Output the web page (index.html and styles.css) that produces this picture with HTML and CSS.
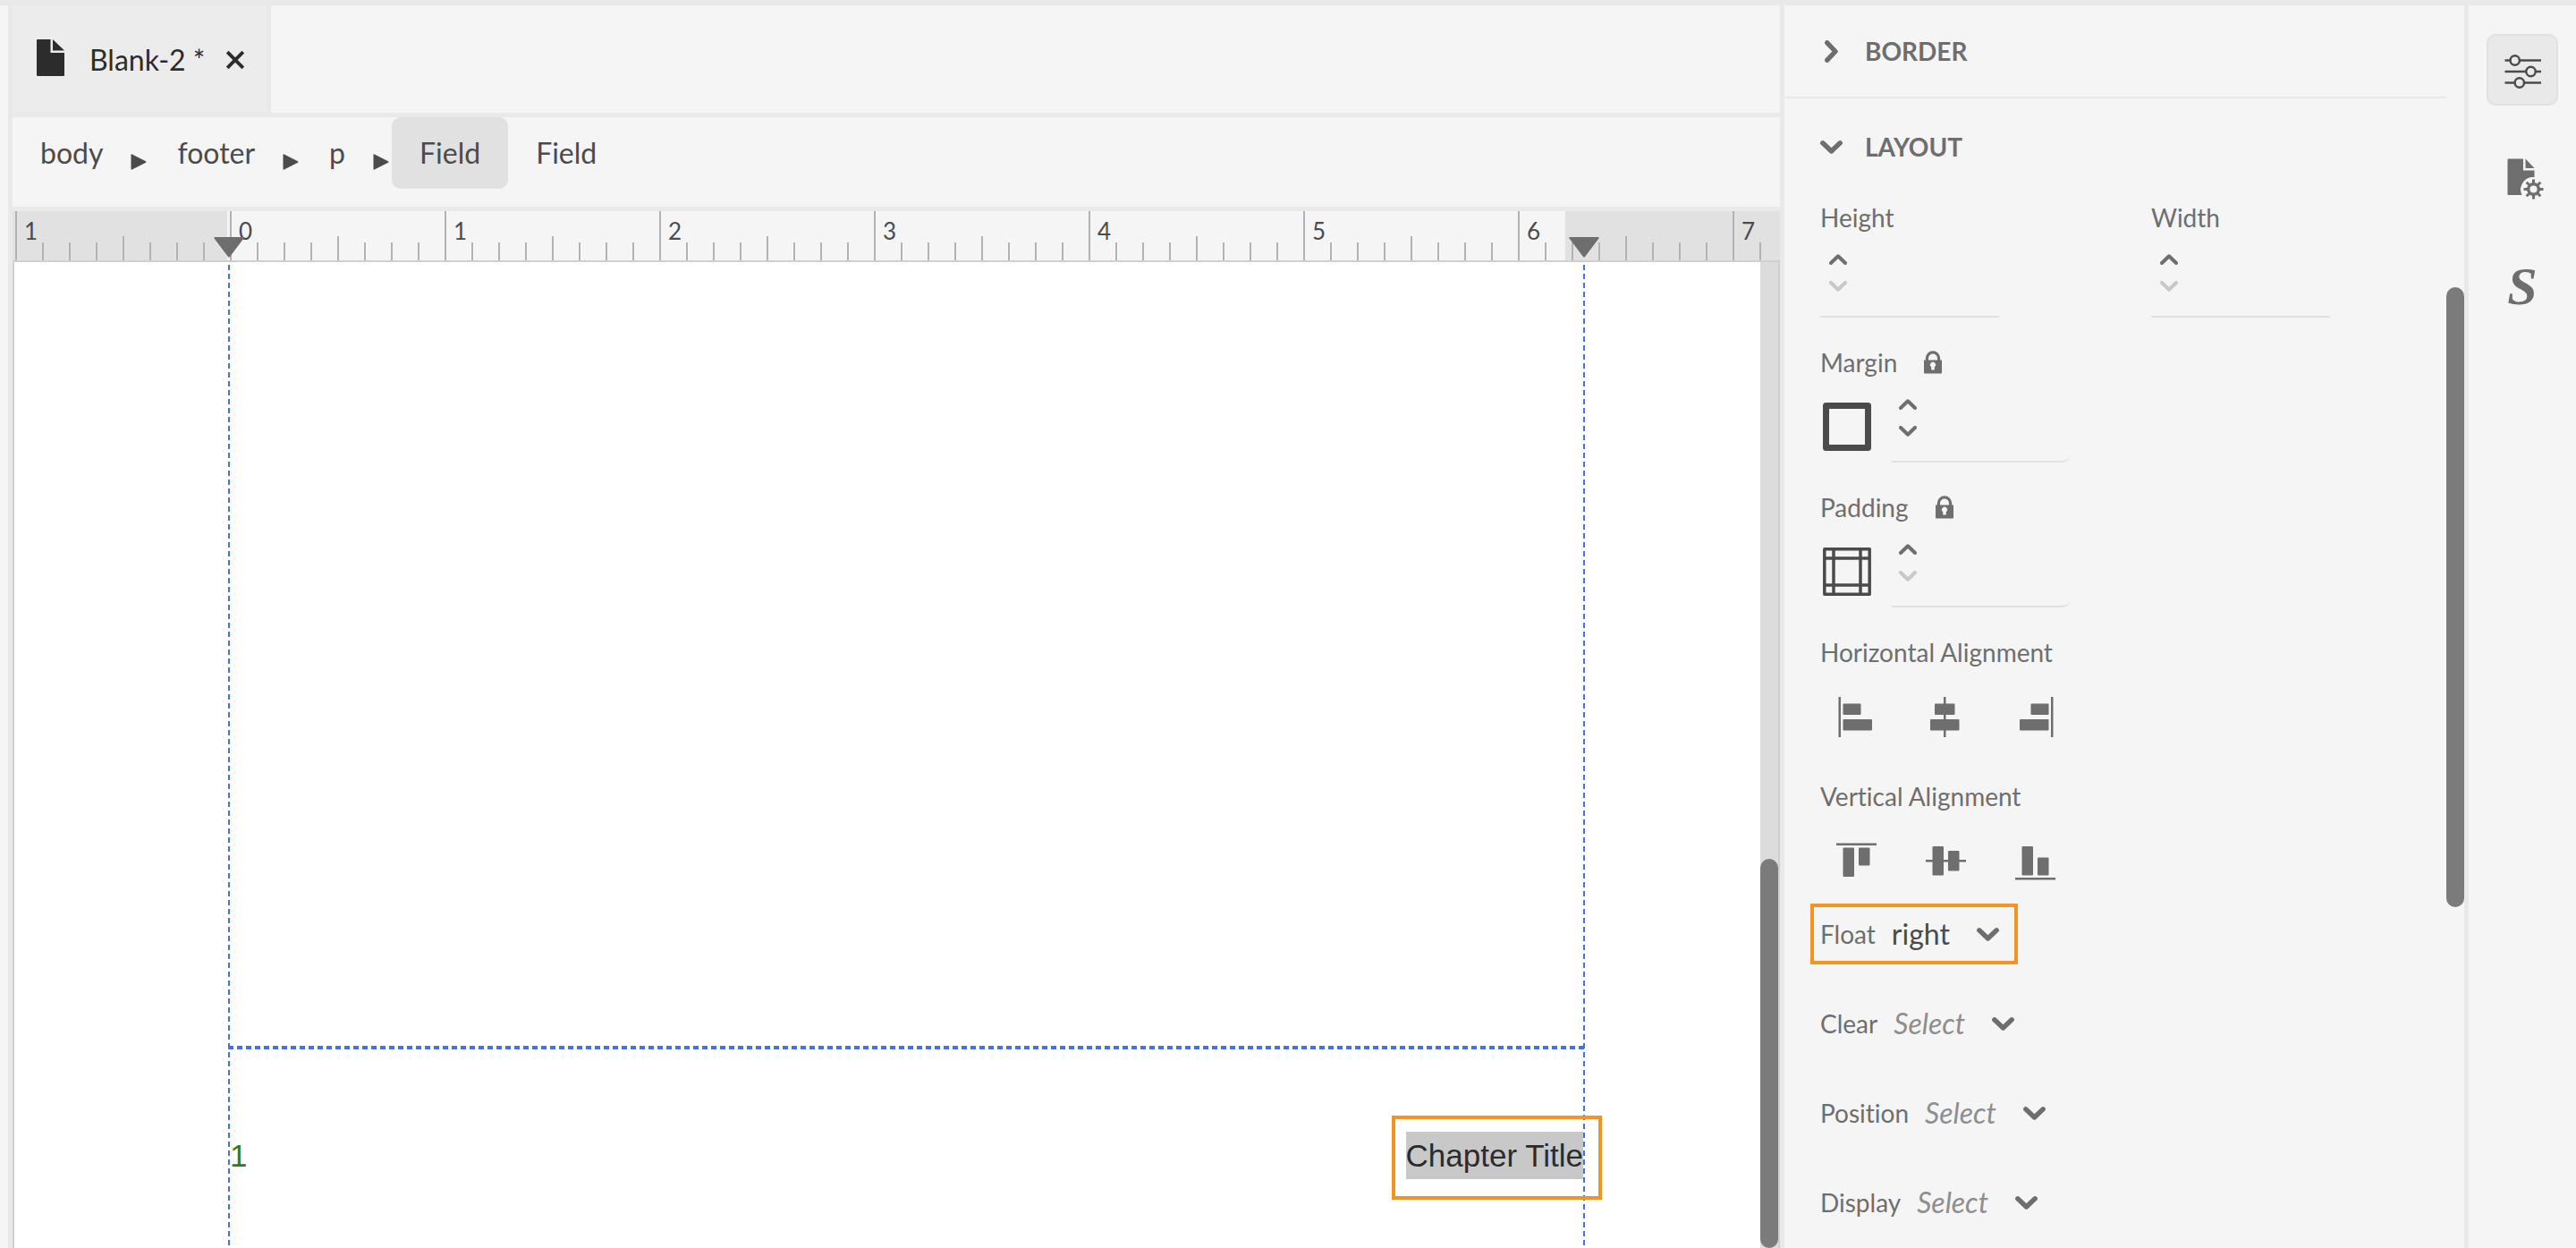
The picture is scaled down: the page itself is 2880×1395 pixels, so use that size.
FILE: index.html
```html
<!DOCTYPE html>
<html lang="en">
<head>
<meta charset="utf-8">
<title>Blank-2</title>
<link rel="stylesheet" href="styles.css">
</head>
<body>
<svg class="sprite" aria-hidden="true">
  <symbol id="i-up" viewBox="0 0 20 12"><path d="M2 10 10 2.300 18 10" fill="none" stroke="currentColor" stroke-width="4" stroke-linecap="round" stroke-linejoin="round"/></symbol>
  <symbol id="i-down" viewBox="0 0 20 12"><path d="M2 2 10 9.700 18 2" fill="none" stroke="currentColor" stroke-width="4" stroke-linecap="round" stroke-linejoin="round"/></symbol>
  <symbol id="i-chevron" viewBox="0 0 25 25"><path d="M2.800 7.800 12.500 17 22.200 7.800" fill="none" stroke="currentColor" stroke-width="5.400" stroke-linecap="round" stroke-linejoin="round"/></symbol>
  <symbol id="i-lock" viewBox="0 0 20 26"><path fill="currentColor" fill-rule="evenodd" d="M0 10.500h1.800V8.500a8.200 8.200 0 0 1 16.400 0v2H20V24.500a1 1 0 0 1-1 1H1a1 1 0 0 1-1-1ZM5 10.500h10V8.500a5 5 0 0 0-10 0ZM8.200 21.500h3.600v-3.400a3 3 0 1 0-3.600 0Z"/></symbol>
  <symbol id="i-arrow" viewBox="0 0 18 18"><path fill="currentColor" d="M.5 1.200Q.5 0 1.700.5L17 8.200q1 .8 0 1.600L1.700 17.500q-1.200.5-1.200-.7Z"/></symbol>
</svg>
<div class="app">
  <main class="editor">
    <div class="tabs">
      <div class="tab">
        <svg class="tab-file" viewBox="0 0 31 41"><path fill="currentColor" d="M1 0H15.500V15H31V40a1 1 0 0 1-1 1H1a1 1 0 0 1-1-1V1a1 1 0 0 1 1-1ZM18 0 31 12.500H18Z"/></svg>
        <span class="tab-name">Blank-2 *</span>
        <button class="icon-button tab-close" type="button" aria-label="Close"><svg viewBox="0 0 20 20"><path d="M1.200 1.200 18.800 18.800M18.800 1.200 1.200 18.800" stroke="currentColor" stroke-width="3.800"/></svg></button>
      </div>
    </div>
    <nav class="crumbs" aria-label="Element path">
      <button class="crumb" type="button">body</button>
      <svg class="crumb-arrow"><use href="#i-arrow"/></svg>
      <button class="crumb" type="button">footer</button>
      <svg class="crumb-arrow"><use href="#i-arrow"/></svg>
      <button class="crumb" type="button">p</button>
      <svg class="crumb-arrow"><use href="#i-arrow"/></svg>
      <button class="crumb crumb-active" type="button">Field</button>
      <button class="crumb" type="button">Field</button>
    </nav>
    <div class="ruler">
      <span class="inch">1</span><span class="inch">0</span><span class="inch">1</span><span class="inch">2</span><span class="inch">3</span><span class="inch">4</span><span class="inch">5</span><span class="inch">6</span><span class="inch">7</span>
      <svg class="marker marker-left" viewBox="0 0 34 23"><path fill="#6e6e6e" d="M1 0H33q1 .5.500 1.500L18 22q-1 1.400-2 0L.5 1.500Q0 .5 1 0Z"/></svg>
      <svg class="marker marker-right" viewBox="0 0 34 23"><path fill="#6e6e6e" d="M1 0H33q1 .5.500 1.500L18 22q-1 1.400-2 0L.5 1.500Q0 .5 1 0Z"/></svg>
    </div>
    <div class="canvas">
      <div class="page">
        <div class="page-body"></div>
        <div class="page-footer">
          <span class="page-number">1</span>
          <span class="field">Chapter Title<span class="field-callout"></span></span>
        </div>
      </div>
      <div class="track"><div class="thumb"></div></div>
    </div>
  </main>

  <aside class="panel">
    <div class="panel-content">
      <button class="section-head section-closed" type="button"><svg class="chevron chevron-closed"><use href="#i-chevron"/></svg>BORDER</button>
      <button class="section-head section-open" type="button"><svg class="chevron"><use href="#i-chevron"/></svg>LAYOUT</button>
      <div class="section-body">
        <div class="pair">
          <div class="group">
            <label class="label" for="height">Height</label>
            <div class="number">
              <div class="stepper"><button type="button" aria-label="Increase height"><svg><use href="#i-up"/></svg></button><button type="button" disabled aria-label="Decrease height"><svg><use href="#i-down"/></svg></button></div>
              <input id="height" type="text">
            </div>
          </div>
          <div class="group">
            <label class="label" for="width">Width</label>
            <div class="number">
              <div class="stepper"><button type="button" aria-label="Increase width"><svg><use href="#i-up"/></svg></button><button type="button" disabled aria-label="Decrease width"><svg><use href="#i-down"/></svg></button></div>
              <input id="width" type="text">
            </div>
          </div>
        </div>
        <div class="group">
          <div class="label-row"><label class="label" for="margin">Margin</label><button class="icon-button lock" type="button" aria-label="Lock margin"><svg><use href="#i-lock"/></svg></button></div>
          <div class="sides">
            <svg class="side-icon" viewBox="0 0 54 54"><rect x="3.500" y="3.500" width="47" height="47" fill="none" stroke="#4b4b4b" stroke-width="7" stroke-linejoin="round"/></svg>
            <div class="number number-round">
              <div class="stepper"><button type="button" aria-label="Increase margin"><svg><use href="#i-up"/></svg></button><button type="button" aria-label="Decrease margin"><svg><use href="#i-down"/></svg></button></div>
              <input id="margin" type="text">
            </div>
          </div>
        </div>
        <div class="group">
          <div class="label-row"><label class="label" for="padding">Padding</label><button class="icon-button lock" type="button" aria-label="Lock padding"><svg><use href="#i-lock"/></svg></button></div>
          <div class="sides">
            <svg class="side-icon" viewBox="0 0 54 54"><path d="M1.800 1.800H52.200V52.200H1.800ZM12 2V52M42 2V52M2 12H52M2 42H52" fill="none" stroke="#4b4b4b" stroke-width="3.500" stroke-linejoin="round"/></svg>
            <div class="number number-round">
              <div class="stepper"><button type="button" aria-label="Increase padding"><svg><use href="#i-up"/></svg></button><button type="button" disabled aria-label="Decrease padding"><svg><use href="#i-down"/></svg></button></div>
              <input id="padding" type="text">
            </div>
          </div>
        </div>
        <div class="align-group">
          <span class="label">Horizontal Alignment</span>
          <div class="aligns">
            <button class="icon-button align" type="button" aria-label="Align left"><svg viewBox="0 0 45 45" fill="currentColor"><path d="M2.500 0H5V45H2.500Z"/><rect x="7.500" y="7.500" width="20" height="12.500" rx="1"/><rect x="7.500" y="25" width="32.500" height="12.500" rx="1"/></svg></button>
            <button class="icon-button align" type="button" aria-label="Align center"><svg viewBox="0 0 45 45" fill="currentColor"><path d="M20 0H22.500V45H20Z"/><rect x="10" y="7.500" width="22.500" height="12.500" rx="1"/><rect x="5" y="25" width="32.500" height="12.500" rx="1"/></svg></button>
            <button class="icon-button align" type="button" aria-label="Align right"><svg viewBox="0 0 45 45" fill="currentColor"><path d="M40 0H42.500V45H40Z"/><rect x="17.500" y="7.500" width="20" height="12.500" rx="1"/><rect x="5" y="25" width="32.500" height="12.500" rx="1"/></svg></button>
          </div>
        </div>
        <div class="align-group">
          <span class="label">Vertical Alignment</span>
          <div class="aligns">
            <button class="icon-button align" type="button" aria-label="Align top"><svg viewBox="0 0 45 45" fill="currentColor"><path d="M0 2.500H45V5H0Z"/><rect x="7.500" y="7.500" width="12.500" height="32.500" rx="1"/><rect x="25" y="7.500" width="12.500" height="20" rx="1"/></svg></button>
            <button class="icon-button align" type="button" aria-label="Align middle"><svg viewBox="0 0 45 45" fill="currentColor"><path d="M0 21H45V23.500H0Z"/><rect x="7.500" y="6" width="12.500" height="32.500" rx="1"/><rect x="25" y="11" width="12.500" height="22.500" rx="1"/></svg></button>
            <button class="icon-button align" type="button" aria-label="Align bottom"><svg viewBox="0 0 45 45" fill="currentColor"><path d="M0 41H45V43.500H0Z"/><rect x="7.500" y="6" width="12.500" height="32.500" rx="1"/><rect x="25" y="18.500" width="12.500" height="20" rx="1"/></svg></button>
          </div>
        </div>
        <div class="choices">
          <div class="choice choice-marked"><label class="label" for="float">Float</label><span class="select"><select id="float"><option>right</option></select><svg class="chevron"><use href="#i-chevron"/></svg></span></div>
          <div class="choice"><label class="label" for="clear">Clear</label><span class="select select-empty"><select id="clear"><option>Select</option></select><svg class="chevron"><use href="#i-chevron"/></svg></span></div>
          <div class="choice"><label class="label" for="position">Position</label><span class="select select-empty"><select id="position"><option>Select</option></select><svg class="chevron"><use href="#i-chevron"/></svg></span></div>
          <div class="choice"><label class="label" for="display">Display</label><span class="select select-empty"><select id="display"><option>Select</option></select><svg class="chevron"><use href="#i-chevron"/></svg></span></div>
        </div>
      </div>
    </div>
    <div class="panel-track"><div class="panel-thumb"></div></div>
  </aside>

  <nav class="rail" aria-label="Panels">
    <button class="rail-button rail-active" type="button" aria-label="Content properties"><svg viewBox="0 0 45 45" fill="none" stroke="currentColor" stroke-width="2.500"><path d="M2.500 11.500H8.500M19 11.500H43M2.500 24H26M37 24H43M2.500 36.500H13.500M24 36.500H43"/><circle cx="13.700" cy="11.500" r="5.200"/><circle cx="31.500" cy="24" r="5.200"/><circle cx="18.800" cy="36.500" r="5.200"/></svg></button>
    <button class="rail-button" type="button" aria-label="File properties"><svg viewBox="0 0 45 45"><path fill="currentColor" d="M6.500 .5H23V13.500H35.500V21A14 14 0 0 0 21.500 41H6.500a1 1 0 0 1-1-1V1.500a1 1 0 0 1 1-1ZM25.500 .5 35.500 11H25.500Z"/><circle cx="34.500" cy="34.500" r="5.800" fill="none" stroke="currentColor" stroke-width="3.400"/><path stroke="currentColor" stroke-width="3" d="M34.500 23.500V28M34.500 41V45.500M23.500 34.500H28M41 34.500H45.500M26.700 26.700 30 30M39 39 42.300 42.300M26.700 42.300 30 39M39 30 42.300 26.700"/></svg></button>
    <button class="rail-button rail-letter" type="button" aria-label="Styles">S</button>
  </nav>
</div>
</body>
</html>
```

FILE: styles.css
```css
* { box-sizing: border-box; }

body {
  margin: 0;
  background: #f5f5f5;
  color: #4b4b4b;
  font: 32px/40px Lato, "Open Sans", sans-serif;
  font-variant-ligatures: none;
}

button, input, select {
  margin: 0;
  padding: 0;
  border: 0;
  background: none;
  color: inherit;
  font: inherit;
}

svg { display: block; flex: none; }
.sprite { position: absolute; width: 0; height: 0; }

.app {
  display: flex;
  height: 100vh;
  padding-left: 9px;
  border-top: 6px solid #e9e9e9;
  overflow: hidden;
}

.icon-button { display: flex; color: #6e6e6e; }

/* Editor column */
.editor {
  flex: 1;
  min-width: 0;
  display: flex;
  flex-direction: column;
  border-left: 5px solid #e9e9e9;
  border-right: 5px solid #e9e9e9;
}

.tabs {
  display: flex;
  height: 125px;
  border-bottom: 5px solid #e9e9e9;
}
.tab {
  display: flex;
  align-items: center;
  padding: 2px 25px 0 27px;
  background: #ececec;
  border-right: 5px solid #e9e9e9;
  color: #2c2c2c;
}
.tab-file { width: 31px; height: 41px; margin-bottom: 6px; }
.tab-name { margin: 0 24px 0 28px; }
.tab-close { color: #2c2c2c; }
.tab-close svg { width: 20px; height: 20px; overflow: visible; }

.crumbs {
  display: flex;
  height: 105px;
  border-bottom: 5px solid #e9e9e9;
}
.crumb { height: 80px; padding: 0 31px; border-radius: 10px; }
.crumb-active { background: #e1e1e1; }
.crumb-arrow { width: 18px; height: 18px; margin: 41px 3px 0 0; }

.ruler {
  position: relative;
  display: flex;
  height: 57px;
  padding-left: 3px;
  overflow: hidden;
  border-bottom: 2px solid #d0d0d0;
  background: linear-gradient(90deg, #e1e1e1 240px, #f5f5f5 240px 1736px, #e1e1e1 1736px);
}
.inch {
  flex: none;
  width: 240px;
  padding: 2px 0 0 8px;
  border-left: 2px solid #b3b3b3;
  font-size: 26px;
  background:
    linear-gradient(#b3b3b3, #b3b3b3) 118px 100% / 2px 27px no-repeat,
    repeating-linear-gradient(90deg, transparent 0 28px, #b3b3b3 28px 30px) 0 100% / 238px 20px no-repeat;
}
.marker { position: absolute; top: 29px; width: 34px; height: 23px; }
.marker-left { left: 225px; }
.marker-right { left: 1740px; }

.canvas {
  flex: 1;
  min-height: 0;
  display: flex;
  background: #fff;
  border-left: 2px solid #d0d0d0;
  border-right: 2px solid #d0d0d0;
}
/* Dashed page margin guides run down both sides */
.page {
  display: flex;
  flex-direction: column;
  width: 1517px;
  margin: 3px auto 0 239px;
  background:
    repeating-linear-gradient(#4472e0 0 6px, transparent 6px 10px) 0 0 / 2px 100% no-repeat,
    repeating-linear-gradient(#4472e0 0 6px, transparent 6px 10px) 100% 0 / 2px 100% no-repeat;
}
.page-body {
  height: 877px;
  background: repeating-linear-gradient(90deg, #4472e0 0 6px, transparent 6px 10px) 0 100% / 100% 4px no-repeat;
}
.page-footer {
  display: flex;
  justify-content: space-between;
  padding: 92px 2px 0;
  font: 35px/53px "Liberation Sans", Arial, sans-serif;
}
.page-number { color: #2f7d20; }
.field { position: relative; background: #c8c8c8; color: #2c2c2c; }
.field-callout {
  position: absolute;
  inset: -18px -21px -23px -16px;
  border: 4px solid #f29423;
}
.track { display: flex; align-items: flex-end; width: 20px; background: #dcdcdc; }
.thumb { width: 20px; height: 435px; border-radius: 10px; background: #7b7b7b; }

/* Properties panel */
.panel {
  flex: none;
  display: flex;
  width: 765px;
  border-right: 5px solid #e9e9e9;
  color: #6e6e6e;
}
.panel-content { flex: 1; }
.panel-track { width: 20px; padding-top: 315px; }
.panel-thumb { height: 693px; border-radius: 10px; background: #7b7b7b; }

.section-head {
  display: flex;
  align-items: center;
  gap: 25px;
  width: 100%;
  padding-left: 40px;
  font-size: 28px;
  font-weight: 700;
}
.section-closed { height: 104px; border-bottom: 2px solid #e9e9e9; }
.section-open { height: 108px; }
.chevron { width: 25px; height: 25px; color: #6e6e6e; }
.chevron-closed { transform: rotate(-90deg); }

.section-body { padding: 5px 0 0 40px; }
.label { font-size: 28px; }
.label-row { display: flex; align-items: center; gap: 30px; }
.lock svg { width: 20px; height: 26px; }

.pair { display: grid; grid-template-columns: 370px 1fr; }
.group { display: flex; flex-direction: column; gap: 12px; margin-bottom: 30px; }
.number {
  display: flex;
  align-items: flex-start;
  width: 200px;
  height: 80px;
  border-bottom: 2px solid #e1e1e1;
}
.number-round { border-bottom-right-radius: 10px; }
.number input { flex: 1; min-width: 0; height: 60px; }
.stepper { display: flex; flex-direction: column; width: 40px; }
.stepper button { display: grid; place-items: center; height: 30px; }
.stepper button:disabled { color: #c8c8c8; }
.stepper svg { width: 20px; height: 12px; }
.number-round .stepper { width: 36px; }
.sides { display: flex; align-items: center; }
.side-icon { width: 54px; height: 54px; margin: 0 23px 0 3px; }

.align-group { display: flex; flex-direction: column; gap: 30px; margin-bottom: 46px; }
.align-group:has(+ .choices) { margin-bottom: 25px; }
.aligns { display: flex; gap: 55px; padding-left: 18px; }
.align svg { width: 45px; height: 45px; }

.choices { display: flex; flex-direction: column; align-items: flex-start; gap: 32px; }
.choice {
  display: flex;
  align-items: center;
  gap: 18px;
  height: 68px;
  padding: 0 17px 0 7px;
  margin-left: -11px;
  border: 4px solid transparent;
}
.choice-marked { border-color: #f29423; }
.select { position: relative; display: flex; align-items: center; color: #4b4b4b; }
.select select { height: 40px; padding-right: 55px; appearance: none; field-sizing: content; }
.select .chevron { position: absolute; right: 0; pointer-events: none; }
.select-empty { color: #8e8e8e; font-style: italic; }

/* Icon rail */
.rail {
  flex: none;
  display: flex;
  flex-direction: column;
  align-items: center;
  gap: 41px;
  width: 120px;
  padding-top: 32px;
}
.rail-button {
  display: grid;
  place-items: center;
  width: 80px;
  height: 80px;
  border: 2px solid transparent;
  border-radius: 10px;
  color: #6e6e6e;
}
.rail-button svg { width: 45px; height: 45px; overflow: visible; }
.rail-active { background: #e9e9e9; border-color: #e1e1e1; color: #4b4b4b; }
.rail-letter { font: italic 700 60px/60px "Liberation Serif", serif; }
```
